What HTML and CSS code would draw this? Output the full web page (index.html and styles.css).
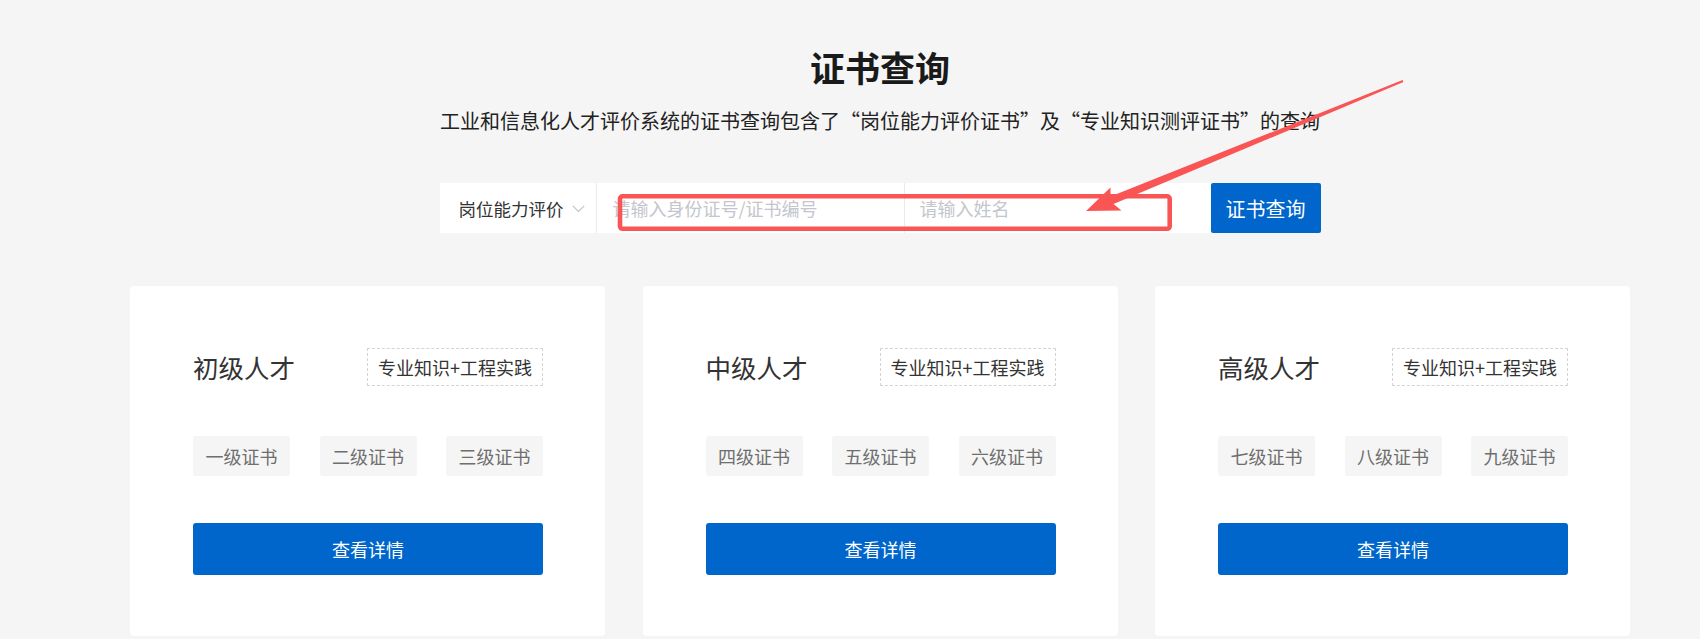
FILE: index.html
```html
<!DOCTYPE html>
<html lang="zh-CN">
<head>
<meta charset="utf-8">
<title>证书查询</title>
<link rel="stylesheet" href="styles.css">
</head>
<body>
<div class="page">
  <div class="container">
    <header class="header">
      <h1 class="title">证书查询</h1>
      <p class="subtitle">工业和信息化人才评价系统的证书查询包含了“岗位能力评价证书”及“专业知识测评证书”的查询</p>
    </header>

    <div class="search">
      <div class="select">
        <span class="select-text">岗位能力评价</span>
        <svg class="chevron" width="13" height="8" viewBox="0 0 13 8"><polyline points="0.8,0.8 6.5,6.5 12.2,0.8" fill="none" stroke="#c0c4cc" stroke-width="1.2"/></svg>
      </div>
      <input class="field field-id" type="text" placeholder="请输入身份证号/证书编号">
      <input class="field field-name" type="text" placeholder="请输入姓名">
      <button class="search-btn" type="button">证书查询</button>
    </div>

    <div class="cards">
      <div class="card">
        <div class="card-head">
          <span class="card-title">初级人才</span>
          <span class="tag">专业知识+工程实践</span>
        </div>
        <div class="chips">
          <span class="chip">一级证书</span>
          <span class="chip">二级证书</span>
          <span class="chip">三级证书</span>
        </div>
        <button class="detail-btn" type="button">查看详情</button>
      </div>
      <div class="card">
        <div class="card-head">
          <span class="card-title">中级人才</span>
          <span class="tag">专业知识+工程实践</span>
        </div>
        <div class="chips">
          <span class="chip">四级证书</span>
          <span class="chip">五级证书</span>
          <span class="chip">六级证书</span>
        </div>
        <button class="detail-btn" type="button">查看详情</button>
      </div>
      <div class="card">
        <div class="card-head">
          <span class="card-title">高级人才</span>
          <span class="tag">专业知识+工程实践</span>
        </div>
        <div class="chips">
          <span class="chip">七级证书</span>
          <span class="chip">八级证书</span>
          <span class="chip">九级证书</span>
        </div>
        <button class="detail-btn" type="button">查看详情</button>
      </div>
    </div>
  </div>

  <svg class="annotation" width="1700" height="639" viewBox="0 0 1700 639">
    <rect x="620" y="196.3" width="549.7" height="32.5" rx="2.5" fill="none" stroke="#fa5555" stroke-width="4.6"/>
    <polygon fill="#fa5555" points="1086,211 1121.5,210.5 1113.5,204 1403.4,82 1402.6,80 1110.5,196.5 1110.5,187.5"/>
  </svg>
</div>
</body>
</html>
```

FILE: styles.css
```css
* {
  box-sizing: border-box;
}

html, body {
  margin: 0;
  padding: 0;
}

body {
  background: #f5f5f5;
  font-family: "Noto Sans CJK SC", "Noto Sans", sans-serif;
  color: #333;
}

.page {
  position: relative;
  width: 1700px;
  height: 639px;
  overflow: hidden;
}

.container {
  width: 1500px;
  margin-left: 130px;
  padding-top: 44px;
  display: flex;
  flex-direction: column;
  align-items: center;
}

.header {
  display: flex;
  flex-direction: column;
  align-items: center;
}

.title {
  margin: 0;
  font-size: 35px;
  line-height: 46px;
  font-weight: 700;
  color: #1a1a1a;
}

.subtitle {
  margin: 16px 0 0;
  font-size: 20px;
  line-height: 30px;
  color: #222;
}

.search {
  margin-top: 47px;
  width: 881px;
  height: 50px;
  display: flex;
  background: #fff;
}

.select {
  width: 157px;
  flex: none;
  display: flex;
  align-items: center;
  padding-left: 19px;
  border-right: 1px solid #ebebeb;
}

.select-text {
  font-size: 17.5px;
  color: #333;
}

.chevron {
  margin-left: 8px;
  margin-top: 2px;
}

.field {
  border: none;
  outline: none;
  background: transparent;
  font-family: inherit;
  font-size: 18px;
  color: #333;
  height: 50px;
  padding: 0 15px;
}

.field::placeholder {
  color: #c3c6cc;
}

.field-id {
  width: 308px;
  border-right: 1px solid #ebebeb;
  padding-left: 16px;
}

.field-name {
  width: 306px;
}

.search-btn {
  width: 110px;
  flex: none;
  height: 50px;
  border: none;
  border-radius: 2px;
  background: #0066cc;
  color: #fff;
  font-family: inherit;
  font-size: 20px;
  padding: 0;
}

.cards {
  margin-top: 53px;
  width: 1500px;
  display: grid;
  grid-template-columns: repeat(3, 475px);
  column-gap: 37.5px;
}

.card {
  background: #fff;
  border-radius: 4px;
  padding: 62px 62px 61px 63px;
  display: flex;
  flex-direction: column;
}

.card-head {
  height: 38px;
  display: flex;
  align-items: center;
  justify-content: space-between;
}

.card-title {
  font-size: 25.5px;
  color: #333;
  line-height: 1;
}

.tag {
  height: 38px;
  line-height: 36px;
  padding: 0 10px;
  border: 1px dashed #d4d4d4;
  font-size: 18px;
  color: #333;
}

.chips {
  margin-top: 50px;
  display: flex;
  justify-content: space-between;
}

.chip {
  width: 97px;
  height: 40px;
  line-height: 40px;
  text-align: center;
  background: #f5f5f5;
  border-radius: 3px;
  font-size: 18px;
  color: #6e6e6e;
}

.detail-btn {
  margin-top: 47px;
  height: 52px;
  border: none;
  border-radius: 3px;
  background: #0066cc;
  color: #fff;
  font-family: inherit;
  font-size: 18px;
  padding: 0;
}

.annotation {
  position: absolute;
  top: 0;
  left: 0;
  pointer-events: none;
}
```
